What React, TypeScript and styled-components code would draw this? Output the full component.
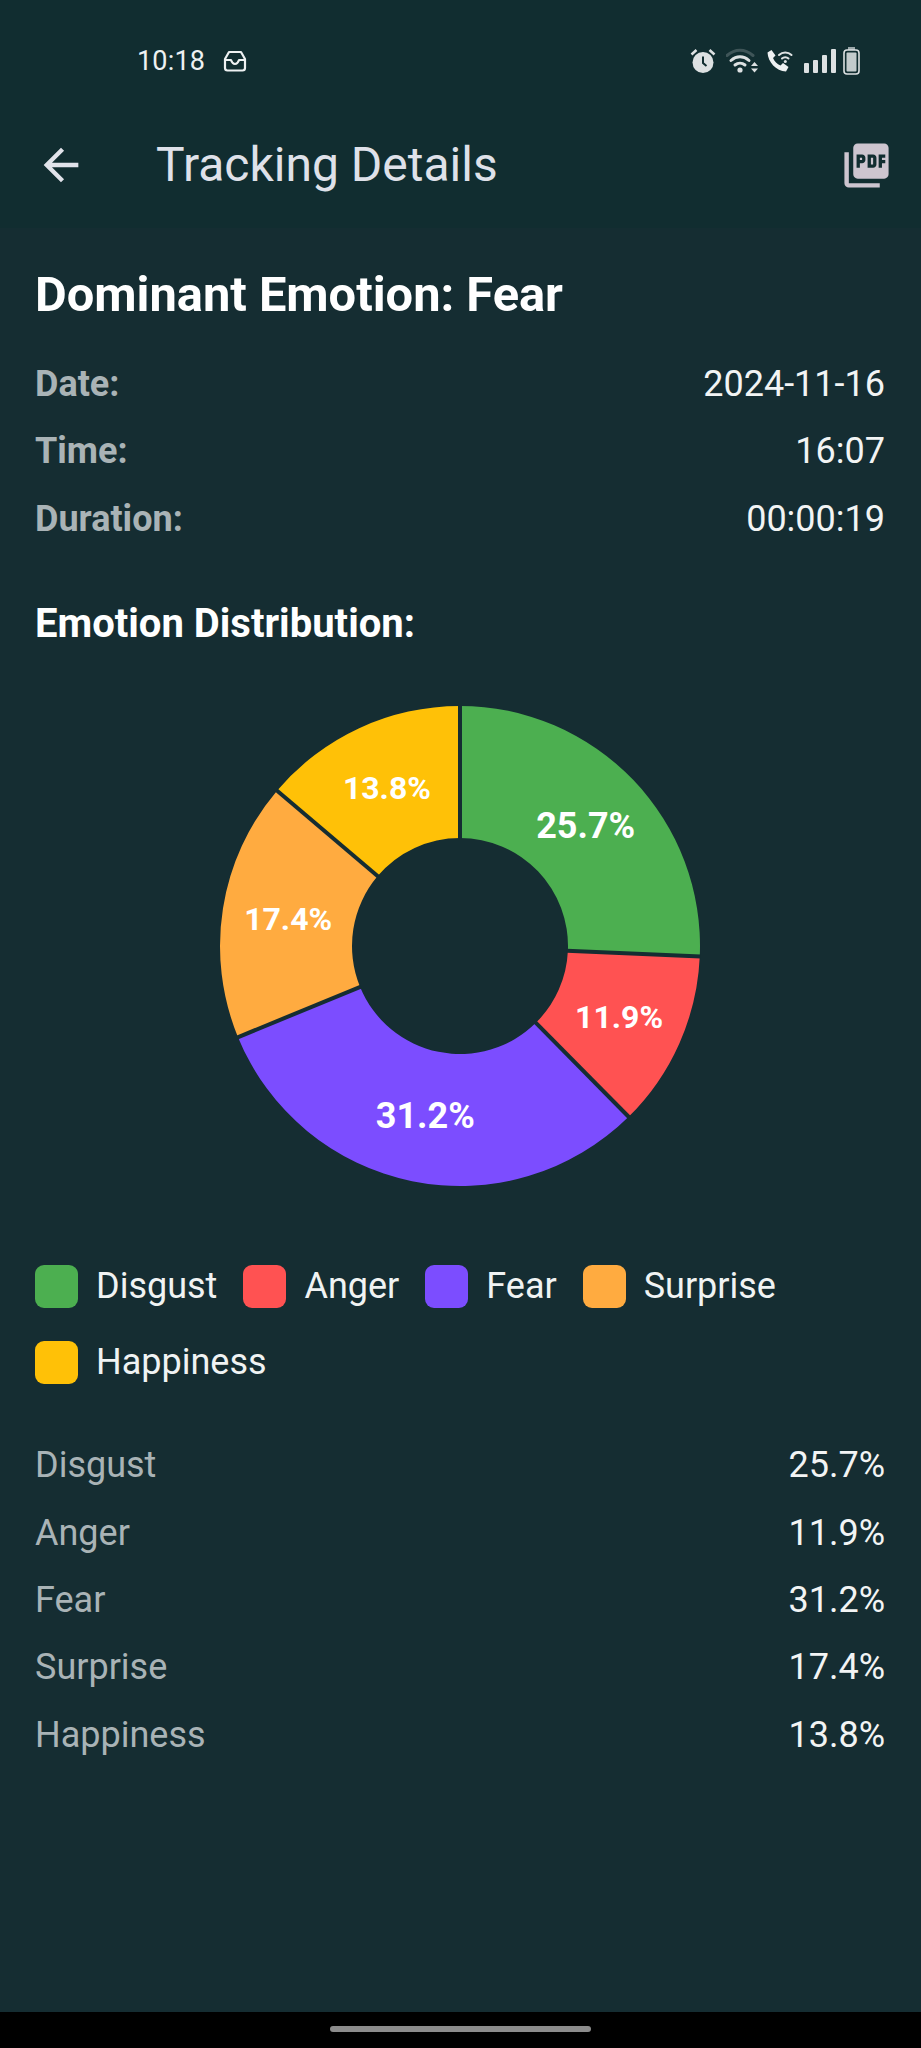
import React from 'react';
import styled, { createGlobalStyle } from 'styled-components';
import { MdArrowBack, MdPictureAsPdf } from 'react-icons/md';

const Global = createGlobalStyle`
  html, body { margin: 0; padding: 0; background: #000; }
  * { box-sizing: border-box; }
`;

const Screen = styled.div`
  width: 921px;
  height: 2048px;
  display: flex;
  flex-direction: column;
  font-family: Roboto, "Liberation Sans", sans-serif;
  background: #152d32;
  color: #fff;
  overflow: hidden;
`;

const TopArea = styled.header`
  background: #112d30;
  height: 228px;
  flex: none;
  display: flex;
  flex-direction: column;
`;

const StatusBar = styled.div`
  height: 124px;
  padding: 42px 61px 0 137px;
  display: flex;
  align-items: flex-start;
  justify-content: space-between;
`;

const StatusLeft = styled.div`
  display: flex;
  align-items: center;
  gap: 18px;
  height: 38px;
`;

const Clock = styled.span`
  font-size: 27px;
  color: #eef1f2;
  letter-spacing: 0.2px;
`;

const StatusRight = styled.div`
  display: flex;
  align-items: center;
  height: 38px;
`;

const IconSlot = styled.span<{ $w: number }>`
  width: ${p => p.$w}px;
  display: flex;
  align-items: center;
  flex: none;
`;

const AppBar = styled.div`
  flex: 1;
  display: flex;
  align-items: flex-start;
  padding: 15px 28px 0 35px;
  color: #e1e3ea;
`;

const BackIcon = styled(MdArrowBack)`
  width: 52px;
  height: 52px;
  flex: none;
`;

const Title = styled.h1`
  margin: 0 0 0 69px;
  flex: 1;
  font-size: 48px;
  line-height: 52px;
  font-weight: 400;
  color: #dfe1e9;
`;

const PdfIcon = styled(MdPictureAsPdf)`
  width: 53px;
  height: 53px;
  flex: none;
  color: #cdc5cf;
`;

const Body = styled.main`
  flex: 1;
  padding: 40px 36px 0 35px;
  display: flex;
  flex-direction: column;
`;

const Heading = styled.h2`
  margin: 0;
  font-size: 48.8px;
  line-height: 54px;
  font-weight: 700;
`;

const InfoList = styled.div`
  margin-top: 28px;
  display: flex;
  flex-direction: column;
`;

const InfoRow = styled.div`
  height: 67.6px;
  display: flex;
  align-items: center;
  justify-content: space-between;
  font-size: 36px;
`;

const InfoLabel = styled.span`
  font-weight: 700;
  color: #a9b3b6;
`;

const InfoValue = styled.span`
  color: #f2f4f4;
`;

const SubHeading = styled.h3`
  margin: 49px 0 0;
  font-size: 40px;
  line-height: 44px;
  font-weight: 700;
`;

const ChartWrap = styled.div`
  margin-top: 56px;
  height: 488px;
  display: flex;
  justify-content: center;
`;

const SliceLabel = styled.text<{ $size: number }>`
  fill: #fff;
  font-weight: 700;
  font-size: ${p => p.$size}px;
  text-anchor: middle;
  dominant-baseline: central;
`;

const Legend = styled.div`
  margin-top: 75px;
  display: flex;
  flex-wrap: wrap;
  column-gap: 26px;
  row-gap: 33px;
`;

const LegendItem = styled.div`
  display: flex;
  align-items: center;
  gap: 18px;
  height: 43px;
  font-size: 36px;
  color: #f0f3f3;
`;

const Swatch = styled.span<{ $color: string }>`
  width: 43px;
  height: 43px;
  border-radius: 9px;
  background: ${p => p.$color};
  flex: none;
`;

const Breakdown = styled.div`
  margin-top: 48px;
  display: flex;
  flex-direction: column;
`;

const BreakdownRow = styled.div`
  height: 67.3px;
  display: flex;
  align-items: center;
  justify-content: space-between;
  font-size: 36px;
`;

const BreakdownName = styled.span`
  color: #a9b3b6;
`;

const BreakdownValue = styled.span`
  color: #f2f4f4;
`;

const NavBar = styled.div`
  height: 36px;
  flex: none;
  background: #000;
  display: flex;
  justify-content: center;
  padding-top: 14px;
`;

const HomeIndicator = styled.div`
  width: 261px;
  height: 6px;
  border-radius: 3px;
  background: #8c8c8c;
`;

const data = [
  { name: 'Disgust', value: 25.7, color: '#4CAF50', size: 36 },
  { name: 'Anger', value: 11.9, color: '#FF5252', size: 32 },
  { name: 'Fear', value: 31.2, color: '#7C4DFF', size: 36 },
  { name: 'Surprise', value: 17.4, color: '#FFAB40', size: 32 },
  { name: 'Happiness', value: 13.8, color: '#FFC107', size: 32 },
];

const C = 244;
const R = 240;
const r = 108;

const pt = (rad: number, a: number) => {
  const t = ((a - 90) * Math.PI) / 180;
  return [C + rad * Math.cos(t), C + rad * Math.sin(t)];
};

const slicePath = (a0: number, a1: number) => {
  const [x0, y0] = pt(R, a0);
  const [x1, y1] = pt(R, a1);
  const [x2, y2] = pt(r, a1);
  const [x3, y3] = pt(r, a0);
  const large = a1 - a0 > 180 ? 1 : 0;
  return `M${x0} ${y0}A${R} ${R} 0 ${large} 1 ${x1} ${y1}L${x2} ${y2}A${r} ${r} 0 ${large} 0 ${x3} ${y3}Z`;
};

function Donut() {
  const total = data.reduce((s, d) => s + d.value, 0);
  let acc = 0;
  return (
    <svg width={488} height={488} viewBox="0 0 488 488">
      {data.map(d => {
        const a0 = (acc / total) * 360;
        acc += d.value;
        const a1 = (acc / total) * 360;
        return <path key={d.name} d={slicePath(a0, a1)} fill={d.color} />;
      })}
      {(() => {
        let a = 0;
        return data.map(d => {
          const [x0, y0] = pt(r - 1, a);
          const [x1, y1] = pt(R + 1, a);
          a += (d.value / total) * 360;
          return <line key={d.name} x1={x0} y1={y0} x2={x1} y2={y1} stroke="#152d32" strokeWidth={4} />;
        });
      })()}
      {(() => {
        let a = 0;
        return data.map(d => {
          const span = (d.value / total) * 360;
          const [x, y] = pt((R + r) / 2, a + span / 2);
          a += span;
          return (
            <SliceLabel key={d.name} x={x} y={y} $size={d.size}>
              {d.value}%
            </SliceLabel>
          );
        });
      })()}
    </svg>
  );
}

const InboxIcon = () => (
  <svg width="24" height="22" viewBox="0 0 24 22" fill="none" stroke="#eef1f2" strokeWidth="2.2" strokeLinejoin="round" strokeLinecap="round">
    <path d="M6 2h12l4 7v9a2.5 2.5 0 0 1-2.5 2.5h-15A2.5 2.5 0 0 1 2 18V9z" />
    <path d="M2.5 10h5.5c1 3 2 4 4 4s3-1 4-4h5.5" />
  </svg>
);

const AlarmIcon = () => (
  <svg width="26" height="26" viewBox="0 0 26 26">
    <circle cx="13" cy="14.5" r="10.5" fill="#dde1e2" />
    <path d="M13 8.5v6.5l3.5 3" stroke="#112d30" strokeWidth="2" fill="none" />
    <path d="M1.5 6.5 6.5 2M24.5 6.5 19.5 2" stroke="#dde1e2" strokeWidth="2.6" fill="none" />
  </svg>
);

const WifiIcon = () => (
  <svg width="33" height="26" viewBox="0 0 33 26" fill="none" strokeLinecap="round">
    <path d="M1 7.5C9 .5 19 .5 27 7.5" stroke="#3f5558" strokeWidth="3" />
    <path d="M5 12.5C10.5 7.5 17.5 7.5 23 12.5" stroke="#dde1e2" strokeWidth="3" />
    <path d="M9 17C12 14.5 16 14.5 19 17" stroke="#dde1e2" strokeWidth="3" />
    <circle cx="14" cy="22" r="2.6" fill="#dde1e2" />
    <path d="M25 18l3.5-4 3.5 4zM25 20.5l3.5 4 3.5-4z" fill="#dde1e2" />
  </svg>
);

const CallWifiIcon = () => (
  <svg width="27" height="26" viewBox="0 0 27 26" fill="none">
    <path d="M1.5 4.5 5.5 2l4 5.5-2.5 2.5c1.5 3.5 4 6 7.5 7.5l2.5-2.5 5.5 4-2.5 4.5C10 23 2 14 1.5 4.5z" fill="#eef1f2" />
    <path d="M13 7c3.5-3.5 9-3.5 12.5 0" stroke="#dde1e2" strokeWidth="2" strokeLinecap="round" />
    <path d="M16 10.5c1.8-1.8 4.7-1.8 6.5 0" stroke="#dde1e2" strokeWidth="2" strokeLinecap="round" />
    <circle cx="19.3" cy="13.5" r="1.5" fill="#dde1e2" />
  </svg>
);

const SignalIcon = () => (
  <svg width="32" height="24" viewBox="0 0 32 24" fill="#dde1e2">
    <rect x="0" y="14" width="5" height="10" rx="1" />
    <rect x="9" y="11" width="5" height="13" rx="1" />
    <rect x="18" y="6" width="5" height="18" rx="1" />
    <rect x="27" y="0" width="5" height="24" rx="1" />
  </svg>
);

const BatteryIcon = () => (
  <svg width="17" height="28" viewBox="0 0 17 28">
    <rect x="5" y="0" width="7" height="3" fill="#9aa7a9" />
    <rect x="1" y="3" width="15" height="24" rx="3" fill="none" stroke="#dde1e2" strokeWidth="1.6" />
    <rect x="3.5" y="5.5" width="10" height="19" rx="1" fill="#c3cbcc" />
  </svg>
);

export default function App() {
  return (
    <Screen>
      <Global />
      <TopArea>
        <StatusBar>
          <StatusLeft>
            <Clock>10:18</Clock>
            <InboxIcon />
          </StatusLeft>
          <StatusRight>
            <IconSlot $w={36}><AlarmIcon /></IconSlot>
            <IconSlot $w={40}><WifiIcon /></IconSlot>
            <IconSlot $w={38}><CallWifiIcon /></IconSlot>
            <IconSlot $w={39}><SignalIcon /></IconSlot>
            <IconSlot $w={17}><BatteryIcon /></IconSlot>
          </StatusRight>
        </StatusBar>
        <AppBar>
          <BackIcon />
          <Title>Tracking Details</Title>
          <PdfIcon />
        </AppBar>
      </TopArea>
      <Body>
        <Heading>Dominant Emotion: Fear</Heading>
        <InfoList>
          <InfoRow><InfoLabel>Date:</InfoLabel><InfoValue>2024-11-16</InfoValue></InfoRow>
          <InfoRow><InfoLabel>Time:</InfoLabel><InfoValue>16:07</InfoValue></InfoRow>
          <InfoRow><InfoLabel>Duration:</InfoLabel><InfoValue>00:00:19</InfoValue></InfoRow>
        </InfoList>
        <SubHeading>Emotion Distribution:</SubHeading>
        <ChartWrap><Donut /></ChartWrap>
        <Legend>
          {data.map(d => (
            <LegendItem key={d.name}>
              <Swatch $color={d.color} />
              {d.name}
            </LegendItem>
          ))}
        </Legend>
        <Breakdown>
          {data.map(d => (
            <BreakdownRow key={d.name}>
              <BreakdownName>{d.name}</BreakdownName>
              <BreakdownValue>{d.value}%</BreakdownValue>
            </BreakdownRow>
          ))}
        </Breakdown>
      </Body>
      <NavBar><HomeIndicator /></NavBar>
    </Screen>
  );
}
